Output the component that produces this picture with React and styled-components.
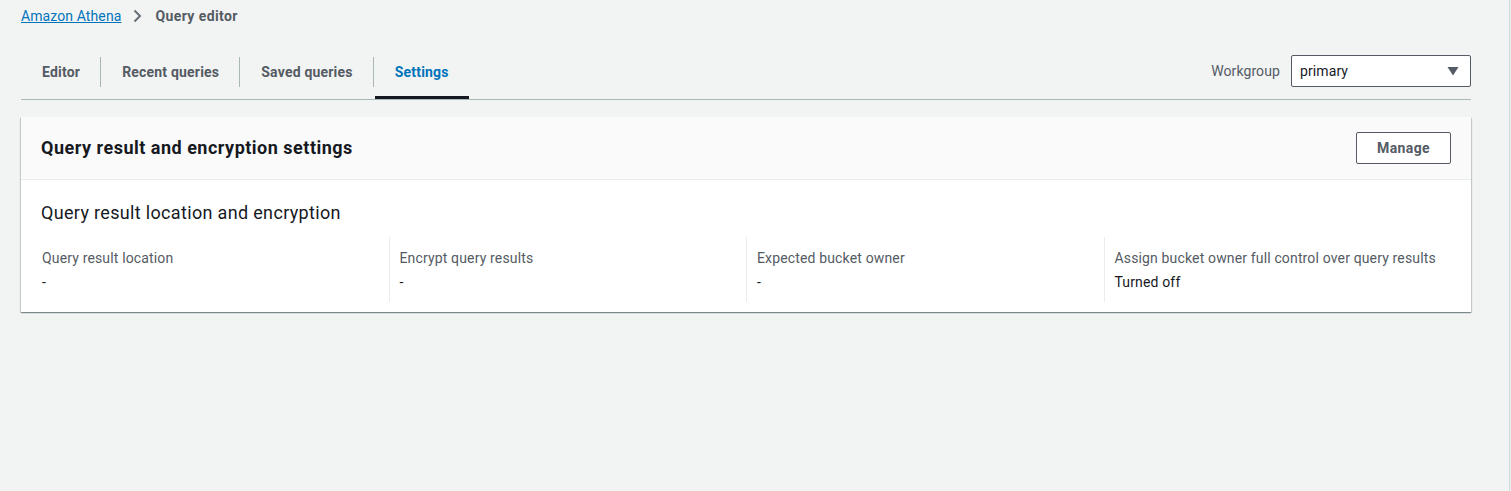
import styled, { createGlobalStyle } from 'styled-components'

const GlobalStyle = createGlobalStyle`
  html, body {
    margin: 0;
    padding: 0;
    background: #f2f3f3;
    font-family: Roboto, 'Noto Sans', Arial, sans-serif;
    color: #16191f;
  }
  * {
    box-sizing: border-box;
  }
`

const columns = [
  { label: 'Query result location', value: '-' },
  { label: 'Encrypt query results', value: '-' },
  { label: 'Expected bucket owner', value: '-' },
  { label: 'Assign bucket owner full control over query results', value: 'Turned off' },
]

const tabs = ['Editor', 'Recent queries', 'Saved queries', 'Settings']

const App = () => {
  return (
    <Page>
      <GlobalStyle />
      <Main>
        <Breadcrumbs>
          <a href='#'>Amazon Athena</a>
          <Chevron width='16' height='16' viewBox='0 0 16 16'>
            <path d='M5.5 2.5 11 8l-5.5 5.5' fill='none' stroke='#687078' strokeWidth='2' />
          </Chevron>
          <span>Query editor</span>
        </Breadcrumbs>

        <TabBar>
          <TabList>
            {tabs.map((t, i) => (
              <Tab key={t} $active={t === 'Settings'}>
                <TabLabel $first={i === 0} $active={t === 'Settings'}>
                  {t}
                </TabLabel>
              </Tab>
            ))}
          </TabList>
          <Workgroup>
            <span>Workgroup</span>
            <Select>
              primary
              <svg width='12' height='10' viewBox='0 0 12 10'>
                <path d='M0.5 1h11L6 9.5z' fill='#545b64' />
              </svg>
            </Select>
          </Workgroup>
        </TabBar>

        <Card>
          <CardHeader>
            <h2>Query result and encryption settings</h2>
            <Button>Manage</Button>
          </CardHeader>
          <CardBody>
            <h3>Query result location and encryption</h3>
            <ColumnGrid>
              {columns.map((c, i) => (
                <Column key={c.label} $first={i === 0}>
                  <Label>{c.label}</Label>
                  <Value>{c.value}</Value>
                </Column>
              ))}
            </ColumnGrid>
          </CardBody>
        </Card>
      </Main>
      <SidePanel />
    </Page>
  )
}

export default App

const Page = styled.div`
  display: flex;
  min-height: 491px;
`

const Main = styled.div`
  flex: 1;
  padding: 6px 38px 0 21px;
`

const SidePanel = styled.div`
  width: 2px;
  border-left: 1px solid #d5dbdb;
  background: #eaeded;
`

const Breadcrumbs = styled.nav`
  display: flex;
  align-items: center;
  height: 20px;
  font-size: 14px;
  line-height: 20px;
  letter-spacing: 0.1px;
  a {
    color: #0073bb;
    text-decoration: underline;
  }
  span {
    color: #545b64;
    font-weight: 700;
    letter-spacing: 0.4px;
  }
`

const Chevron = styled.svg`
  margin: 0 10px 0 8px;
`

const TabBar = styled.div`
  display: flex;
  justify-content: space-between;
  align-items: center;
  margin-top: 17px;
  border-bottom: 1px solid #aab7b8;
`

const TabList = styled.div`
  display: flex;
`

const Tab = styled.div`
  position: relative;
  display: flex;
  align-items: center;
  height: 56px;
  padding-top: 2px;
  cursor: pointer;
  &::after {
    content: '';
    position: absolute;
    left: 2px;
    right: 0;
    bottom: 0;
    height: 3px;
    background: ${(p) => (p.$active ? '#16191f' : 'transparent')};
  }
`

const TabLabel = styled.div`
  padding: 5px 20px 5px 21px;
  border-left: ${(p) => (p.$first ? 'none' : '1px solid #aab7b8')};
  font-size: 14px;
  line-height: 20px;
  font-weight: 700;
  letter-spacing: 0.2px;
  color: ${(p) => (p.$active ? '#0073bb' : '#545b64')};
`

const Workgroup = styled.div`
  display: flex;
  align-items: center;
  gap: 11px;
  font-size: 14px;
  letter-spacing: 0.1px;
  color: #545b64;
`

const Select = styled.div`
  display: flex;
  justify-content: space-between;
  align-items: center;
  width: 180px;
  height: 32px;
  padding: 0 11px 0 8px;
  background: #fff;
  border: 1px solid #545b64;
  border-radius: 2px;
  font-size: 14px;
  color: #16191f;
`

const Card = styled.div`
  margin-top: 17px;
  background: #fff;
  box-shadow: 0 1px 1px 0 rgba(0, 28, 36, 0.3), 1px 1px 1px 0 rgba(0, 28, 36, 0.15),
    -1px 1px 1px 0 rgba(0, 28, 36, 0.15);
`

const CardHeader = styled.div`
  display: flex;
  justify-content: space-between;
  align-items: center;
  padding: 15px 20px;
  background: #fafafa;
  border-bottom: 1px solid #eaeded;
  h2 {
    margin: 0;
    font-size: 18px;
    line-height: 22px;
    font-weight: 700;
    letter-spacing: 0.5px;
    color: #16191f;
  }
`

const Button = styled.button`
  width: 95px;
  height: 32px;
  background: #fff;
  border: 1px solid #545b64;
  border-radius: 2px;
  font-family: inherit;
  font-size: 14px;
  font-weight: 700;
  letter-spacing: 0.4px;
  color: #545b64;
  cursor: pointer;
`

const CardBody = styled.div`
  padding: 22px 20px 10px;
  h3 {
    margin: 0;
    font-size: 18px;
    line-height: 22px;
    font-weight: 400;
    letter-spacing: 0.33px;
    color: #16191f;
  }
`

const ColumnGrid = styled.div`
  display: grid;
  grid-template-columns: repeat(4, 1fr);
  margin: 13px -10px 0;
`

const Column = styled.div`
  padding: 10px 10px 9px;
  border-left: ${(p) => (p.$first ? '1px solid transparent' : '1px solid #eaeded')};
  font-size: 14px;
  line-height: 22px;
  letter-spacing: 0.15px;
`

const Label = styled.div`
  color: #545b64;
`

const Value = styled.div`
  margin-top: 2px;
  color: #16191f;
`
